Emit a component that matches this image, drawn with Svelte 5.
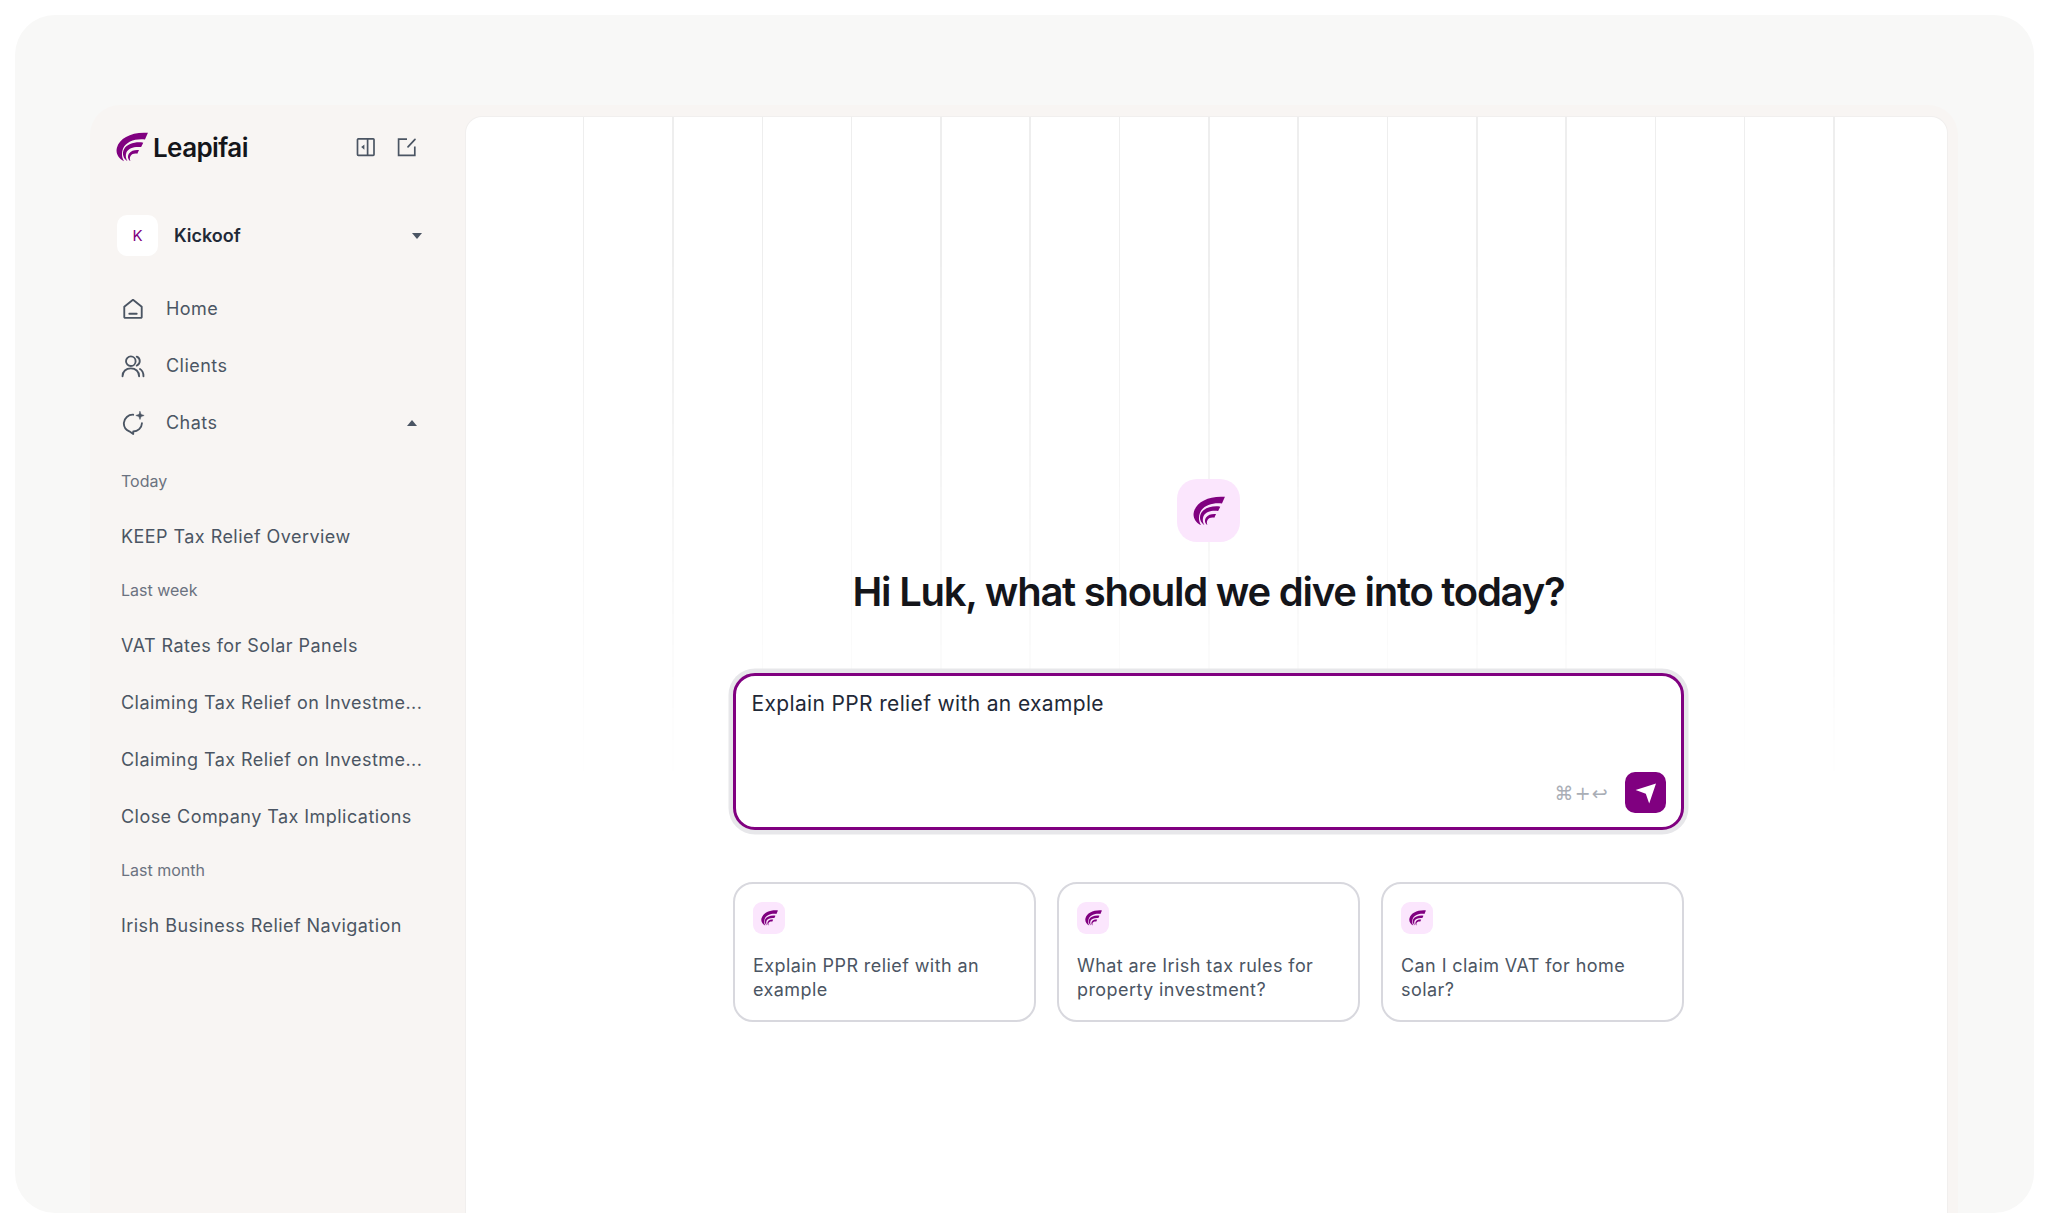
<script lang="ts">
  const nav = [
    { label: 'Home', icon: 'home' },
    { label: 'Clients', icon: 'clients' },
    { label: 'Chats', icon: 'chats', caret: true }
  ]

  const history = [
    { title: 'Today', chats: ['KEEP Tax Relief Overview'] },
    {
      title: 'Last week',
      chats: [
        'VAT Rates for Solar Panels',
        'Claiming Tax Relief on Investme...',
        'Claiming Tax Relief on Investme...',
        'Close Company Tax Implications'
      ]
    },
    { title: 'Last month', chats: ['Irish Business Relief Navigation'] }
  ]

  const prompts = [
    'Explain PPR relief with an example',
    'What are Irish tax rules for property investment?',
    'Can I claim VAT for home solar?'
  ]
</script>

{#snippet logo(size: number)}
  <svg width={size} height={size * 0.93} viewBox="0 0 30 28" fill="#800080">
    <path d="M30 .8 27.2 7C18 6 9.5 9 6.6 15.5 5 19.5 5.2 24 7.5 27.6 2.2 25 -.6 20 .8 14.8 3.2 5.6 15 -.4 30 .8Z" />
    <path d="M25.6 10 23.6 14.2C17.4 13.4 12 15 9.8 19 8.6 22 9.2 25 10.8 27.6 6.4 24.6 5.4 20 7.6 16 10.6 11.2 17.6 9 25.6 10Z" />
    <path d="M21.6 17 20 20.4C16.6 20 14 21 13.2 23.6 12.8 25 13 26.4 13.6 27.6 10.8 25.4 10.6 22.4 12.2 20.2 14.2 17.6 17.6 16.6 21.6 17Z" />
  </svg>
{/snippet}

{#snippet navIcon(name: string)}
  <svg class="nav-icon" width="24" height="24" viewBox="0 0 22 22" fill="none" stroke="#4b5563" stroke-width="1.7" stroke-linecap="round" stroke-linejoin="round">
    {#if name === 'home'}
      <path d="M3 9 11 2.6 19 9v9.4a.8.8 0 0 1-.8.8H3.8a.8.8 0 0 1-.8-.8Z" />
      <path d="M7.6 15.4h6.8" />
    {:else if name === 'clients'}
      <circle cx="9" cy="6.6" r="4.4" />
      <path d="M1.4 20.4c0-4.4 3.2-7.2 7.6-7.2s7.6 2.8 7.6 7.2" />
      <path d="M14.4 2.4a4.4 4.4 0 0 1 0 8.2" />
      <path d="M17.4 13.8c2 1.2 3.2 3.6 3.2 6.6" />
    {:else}
      <path d="M11.2 3.4A8.2 8.2 0 0 0 2.6 11a8 8 0 0 0 5 7.6l3.6 2.4v-2.2a8 8 0 0 0 8-7.6" />
      <path d="M17.4.4l1 2.7 2.8 1-2.8 1-1 2.7-1-2.7-2.8-1 2.8-1Z" fill="#4b5563" stroke-width="0.5" />
    {/if}
  </svg>
{/snippet}

<div class="page">
  <div class="frame">
    <div class="inner">
      <aside class="sidebar">
        <div class="brand">
          {@render logo(32)}
          <span class="brand-name">Leapifai</span>
          <div class="brand-actions">
            <svg width="20" height="20" viewBox="0 0 20 20" fill="none" stroke="#4b5563" stroke-width="1.7">
              <rect x="1.5" y="1.8" width="16.5" height="16.5" rx="0.8" />
              <path d="M11.6 1.8v16.5" />
              <path d="M8.4 7.4v5.4L5.2 10.1Z" fill="#4b5563" stroke="none" />
            </svg>
            <svg width="20" height="20" viewBox="0 0 20 20" fill="none" stroke="#4b5563" stroke-width="1.7">
              <path d="M10 2.2H1.6v16.2h16.2V9.6" />
              <path d="M18 2.4 11 9.8" stroke-linecap="round" />
            </svg>
          </div>
        </div>

        <div class="workspace">
          <span class="avatar">K</span>
          <span class="workspace-name">Kickoof</span>
          <span class="caret down"></span>
        </div>

        <nav class="nav">
          {#each nav as item}
            <div class="row nav-row">
              {@render navIcon(item.icon)}
              <span>{item.label}</span>
              {#if item.caret}<span class="caret up"></span>{/if}
            </div>
          {/each}
        </nav>

        <div class="history">
          {#each history as group}
            <div class="group-title">{group.title}</div>
            {#each group.chats as chat}
              <div class="row">{chat}</div>
            {/each}
          {/each}
        </div>
      </aside>

      <main class="main">
        <div class="lines"></div>
        <div class="content">
          <div class="tile">{@render logo(32)}</div>
          <h1>Hi Luk, what should we dive into today?</h1>

          <div class="composer">
            <div class="composer-text">Explain PPR relief with an example</div>
            <div class="composer-foot">
              <span class="shortcut">⌘+↩</span>
              <button class="send" aria-label="Send">
                <svg width="41" height="41" viewBox="0 0 41 41" fill="#fff">
                  <path d="M10.6 18 31 11.6 24.2 31.4 20.8 21.8Z" />
                </svg>
              </button>
            </div>
          </div>

          <div class="cards">
            {#each prompts as prompt}
              <div class="card">
                <div class="card-tile">{@render logo(17)}</div>
                <p>{prompt}</p>
              </div>
            {/each}
          </div>
        </div>
      </main>
    </div>
  </div>
</div>

<style>
  :global(body) {
    background: #fff;
    font-family: Inter, "Liberation Sans", sans-serif;
  }

  .page {
    width: 2048px;
    height: 1229px;
    padding: 15px 14px 16px 15px;
    box-sizing: border-box;
  }

  .frame {
    height: 100%;
    box-sizing: border-box;
    padding: 90px 76px 0 75px;
    background: #f8f8f7;
    border-radius: 40px;
    overflow: hidden;
  }

  .inner {
    display: flex;
    height: 100%;
    background: #f8f5f3;
    border-radius: 30px 30px 0 0;
    padding-right: 11px;
    box-sizing: border-box;
  }

  .sidebar {
    width: 376px;
    flex: none;
    box-sizing: border-box;
    padding: 22px 1px 0 26px;
    color: #4b5563;
    font-size: 18px;
  }

  .brand {
    display: flex;
    align-items: center;
    height: 40px;
  }

  .brand-name {
    margin-left: 5px;
    font-size: 26px;
    font-weight: 600;
    letter-spacing: -0.6px;
    color: #14151a;
  }

  .brand-actions {
    display: flex;
    gap: 21px;
    margin-left: auto;
    margin-right: 48px;
  }

  .workspace {
    display: flex;
    align-items: center;
    margin-top: 48px;
    margin-left: 1px;
    height: 41px;
    padding-right: 43px;
  }

  .avatar {
    width: 41px;
    height: 41px;
    display: flex;
    align-items: center;
    justify-content: center;
    background: #fff;
    border-radius: 10px;
    color: #800080;
    font-size: 15px;
  }

  .workspace-name {
    margin-left: 16px;
    font-weight: 600;
    color: #1f2937;
    flex: 1;
  }

  .caret {
    width: 0;
    height: 0;
    border-left: 5px solid transparent;
    border-right: 5px solid transparent;
  }

  .caret.down {
    border-top: 6px solid #4b5563;
  }

  .caret.up {
    border-bottom: 6px solid #4b5563;
    margin-left: auto;
    margin-right: 48px;
  }

  .nav {
    margin-top: 23px;
  }

  .row {
    display: flex;
    align-items: center;
    height: 57px;
    box-sizing: border-box;
    padding: 2px 0 0 5px;
    white-space: nowrap;
    letter-spacing: 0.45px;
  }

  .nav-icon {
    margin-right: 21px;
    flex: none;
  }

  .history {
    margin-top: 4px;
  }

  .group-title {
    display: flex;
    align-items: center;
    height: 53px;
    padding-left: 5px;
    font-size: 16px;
    color: #6b7280;
  }

  .row + .group-title {
    height: 52px;
  }

  .main {
    position: relative;
    flex: 1;
    margin-top: 12px;
    background: #fff;
    border-radius: 16px 16px 0 0;
    box-shadow: 0 0 0 1px #f1efee;
    padding-left: 4px;
  }

  .lines {
    position: absolute;
    top: 0;
    left: 117px;
    width: 1252px;
    height: 670px;
    background: repeating-linear-gradient(90deg, #eeeeee 0 1.5px, transparent 1.5px 89.3px);
    mask-image: linear-gradient(#000 20%, transparent);
  }

  .content {
    position: relative;
    display: flex;
    flex-direction: column;
    align-items: center;
    padding-top: 362px;
  }

  .tile {
    width: 63px;
    height: 63px;
    display: flex;
    align-items: center;
    justify-content: center;
    background: #fbe6fd;
    border-radius: 20px;
  }

  h1 {
    margin: 24px 0 0;
    font-size: 40px;
    line-height: 52px;
    font-weight: 600;
    letter-spacing: -1.25px;
    color: #14151a;
  }

  .composer {
    width: 951px;
    height: 157px;
    margin-top: 55px;
    box-sizing: border-box;
    padding: 13.5px 15px 16px 15.5px;
    background: #fff;
    border: 3px solid #800080;
    border-radius: 22px;
    box-shadow: 0 0 0 4.5px #e7e7ea;
    display: flex;
    flex-direction: column;
    justify-content: space-between;
  }

  .composer-text {
    font-size: 21px;
    line-height: 28px;
    letter-spacing: 0.35px;
    color: #1f2937;
  }

  .composer-foot {
    display: flex;
    align-items: center;
    justify-content: flex-end;
    gap: 16px;
    margin-bottom: -2px;
  }

  .shortcut {
    color: #a9aeb6;
    font-size: 19px;
    letter-spacing: 1.2px;
    font-family: "DejaVu Sans", sans-serif;
  }

  .send {
    width: 41px;
    height: 41px;
    padding: 0;
    border: 0;
    border-radius: 10px;
    background: #800080;
  }

  .send svg {
    display: block;
  }

  .cards {
    display: grid;
    grid-template-columns: repeat(3, 303px);
    gap: 21px;
    margin-top: 52px;
  }

  .card {
    height: 140px;
    box-sizing: border-box;
    padding: 18px 18px 0;
    background: #fff;
    border: 2px solid #d8d8de;
    border-radius: 20px;
  }

  .card-tile {
    width: 32px;
    height: 32px;
    display: flex;
    align-items: center;
    justify-content: center;
    background: #fbe6fd;
    border-radius: 9px;
  }

  .card p {
    margin: 20px 0 0;
    font-size: 18px;
    line-height: 23.5px;
    letter-spacing: 0.42px;
    color: #4b5563;
  }
</style>
